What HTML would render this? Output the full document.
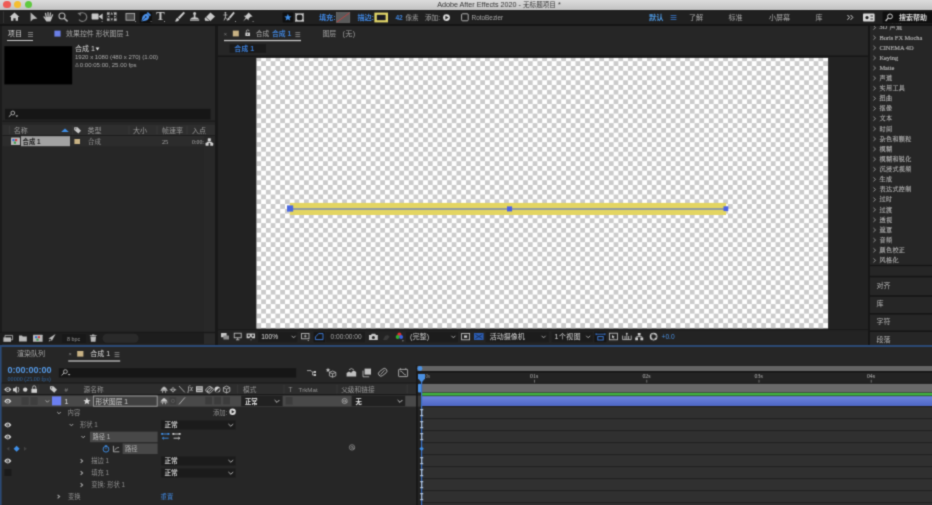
<!DOCTYPE html>
<html lang="zh-CN">
<head>
<meta charset="utf-8">
<title>Adobe After Effects 2020 - 无标题项目 *</title>
<style>
*{margin:0;padding:0;box-sizing:border-box}
html,body{width:932px;height:505px;overflow:hidden;background:#232323}
body{position:relative;font-family:"Liberation Sans","Noto Sans CJK SC",sans-serif;font-size:7px;color:#a8a8a8;line-height:1}
.a{position:absolute}
.t{position:absolute;white-space:nowrap;line-height:10px;height:10px}
.s{font-family:"Liberation Serif","Noto Serif CJK SC",serif}
.b{color:#4f9be6}
.w{color:#d8d8d8}
svg{position:absolute;overflow:visible}
#app{position:absolute;left:0;top:0;width:932px;height:505px;overflow:hidden;filter:url(#soft);will-change:transform}
</style>
</head>
<body>
<svg width="0" height="0" style="position:absolute"><defs><filter id="soft" x="0" y="0" width="100%" height="100%" color-interpolation-filters="sRGB"><feConvolveMatrix order="3" kernelMatrix="1 4 1 4 16 4 1 4 1" divisor="36" edgeMode="duplicate" preserveAlpha="true"/></filter></defs></svg>
<div id="app">

<!-- ===== title bar ===== -->
<div class="a" id="titlebar" style="left:0;top:0;width:932px;height:9.6px;background:linear-gradient(#dcdcdc,#c2c2c2)"></div>
<div class="a" style="left:3.4px;top:1.2px;width:7.2px;height:7.2px;border-radius:50%;background:#ee5b55"></div>
<div class="a" style="left:14px;top:1.2px;width:7.2px;height:7.2px;border-radius:50%;background:#f5be30"></div>
<div class="a" style="left:24.9px;top:1.2px;width:7.2px;height:7.2px;border-radius:50%;background:#5fc93f"></div>
<div class="t" style="left:437.2px;top:0.3px;font-size:7.2px;color:#363636">Adobe After Effects 2020 - <span style="font-size:6.6px">无标题项目</span> *</div>

<!-- ===== toolbar ===== -->
<div class="a" id="toolbar" style="left:0;top:9.6px;width:932px;height:15.4px;background:#202020"></div>
<div class="a" style="left:0;top:24px;width:932px;height:1.5px;background:#141414"></div>

<svg id="tbicons" style="left:0;top:0" width="932" height="505" viewBox="0 0 932 505">
<g fill="#c8c8c8" stroke="none">
<!-- grip -->
<rect x="3.2" y="11.5" width="0.8" height="11.5" fill="#3a3a3a"/>
<!-- home -->
<path d="M14.5 12.6 L9.6 17 L11 17 L11 20.8 L13.4 20.8 L13.4 18.2 L15.6 18.2 L15.6 20.8 L18 20.8 L18 17 L19.4 17 Z"/>
<!-- arrow -->
<path d="M30.6 12.6 L30.6 21.6 L33 19.2 L37.4 18.6 Z" fill="#b4b4b4"/>
<!-- hand -->
<path d="M45.6 17 L51.6 17 C51.8 19 51.2 20.4 50.4 21.4 L46.4 21.4 C45.6 20.6 45.2 19 45.6 17 Z" fill="#c0c0c0"/>
<path d="M46.4 17.6 L45.5 13.4 M48.1 17.4 L48 12.6 M49.8 17.4 L50.5 13 M51.2 18 L52.6 14.8 M46 19.6 L44 16.8" stroke="#c0c0c0" stroke-width="1.25" stroke-linecap="round" fill="none"/>
<!-- magnifier -->
<circle cx="62" cy="16" r="3" fill="none" stroke="#b0b0b0" stroke-width="1.1"/>
<path d="M64.2 18.2 L67.6 21.4" stroke="#b0b0b0" stroke-width="1.5" fill="none"/>
<!-- rotate -->
<path d="M79.4 14 A4.3 4.3 0 1 1 79 19.6" fill="none" stroke="#7c7c7c" stroke-width="1.2"/>
<path d="M77.4 13 L81 12.4 L80.6 16 Z" fill="#7c7c7c"/>
<!-- camera -->
<rect x="91.6" y="13.6" width="7" height="6" rx="0.8"/>
<path d="M98.6 16.6 L102.6 13.6 L102.6 19.8 Z"/>
<rect x="101.6" y="21" width="1" height="1" fill="#999"/>
<!-- pan behind -->
<g fill="#b4b4b4"><rect x="107" y="12.4" width="2.6" height="2.4"/><rect x="114" y="12.4" width="2.6" height="2.4"/><rect x="107" y="18.4" width="2.6" height="2.4"/><rect x="114" y="18.4" width="2.6" height="2.4"/>
<path d="M110.4 14.6 L111.8 12.6 L113.2 14.6 Z M110.4 18.6 L111.8 20.6 L113.2 18.6 Z M109.4 15.4 L107.4 16.6 L109.4 17.8 Z M114.2 15.4 L116.2 16.6 L114.2 17.8 Z"/></g>
<path d="M107 12.4 H116.6 V20.8 H107 Z" fill="none" stroke="#8a8a8a" stroke-width="0.5" stroke-dasharray="1 1"/>
<!-- rectangle -->
<rect x="126" y="13.4" width="8.6" height="6.8" fill="#4a4a4a" stroke="#b0b0b0" stroke-width="0.9"/>
<rect x="135" y="21" width="1" height="1" fill="#999"/>
<!-- pen selected -->
<rect x="139.6" y="11.8" width="12.4" height="11.4" rx="1" fill="#101010"/>
<path d="M141.4 21.4 L142.4 16.8 C143.4 14.8 145.6 13.6 147 13.8 L149.2 16 C149.4 17.4 148.2 19.6 146.2 20.6 Z" fill="#4a90ea"/>
<path d="M147.9 12 L151 15.1 L149.8 16.3 L146.7 13.2 Z" fill="#4a90ea"/>
<path d="M141.6 21.2 L145.4 17.4" stroke="#101010" stroke-width="0.6"/>
<circle cx="145.8" cy="17" r="0.8" fill="#101010"/>
<rect x="150.6" y="21" width="1" height="1" fill="#808080"/>
<!-- brush -->
<path d="M183.6 11.8 L185 13 L179.6 19 L177.8 17.6 Z"/>
<path d="M177.4 17.8 L179.2 19.4 C178.8 21 176.8 21.8 175 21.4 C176 20.6 175.8 18.6 177.4 17.8 Z"/>
<!-- stamp -->
<circle cx="194.6" cy="13.4" r="1.5"/>
<path d="M193.9 14.4 L195.3 14.4 L195.6 17.4 L197.2 17.6 L199 19 L190.2 19 L192 17.6 L193.6 17.4 Z"/>
<rect x="190" y="19.4" width="9.2" height="1.3"/>
<!-- eraser -->
<path d="M210.4 12.6 L215 16.4 L210.4 21 L205 20.8 L204.6 18.6 Z"/>
<path d="M206 17.4 L210 21" stroke="#202020" stroke-width="0.7"/>
<!-- roto brush -->
<path d="M233.4 11.8 L234.8 13 L230.4 18.4 L228.8 17.2 Z"/>
<path d="M228.4 17.4 L230 18.8 C229.6 20.2 228 20.8 226.6 20.4 C227.6 19.8 227.2 18 228.4 17.4 Z"/>
<circle cx="225.4" cy="12.8" r="0.9"/>
<path d="M225.4 13.6 V17.4 M223.4 15 H227.4 M225.4 17.2 L224 20.4 M225.4 17.2 L226.6 19.4" stroke="#c8c8c8" stroke-width="0.8" fill="none"/>
<rect x="235" y="21" width="1" height="1" fill="#999"/>
<!-- pin -->
<path d="M248.6 12.6 L252.6 16.4 L250.6 16.8 L248.6 18.8 L248.6 20.6 L246.6 18.6 L243 21.4 L245.8 17.8 L243.8 15.8 L245.6 15.8 L247.6 13.8 Z"/>
<rect x="252.6" y="21" width="1" height="1" fill="#999"/>
<!-- star box -->
<rect x="282.6" y="12.4" width="10.6" height="10" rx="0.8" fill="#0f0f0f"/>
<path d="M287.9 13.8 L288.9 16.2 L291.5 16.4 L289.5 18 L290.2 20.6 L287.9 19.2 L285.6 20.6 L286.3 18 L284.3 16.4 L286.9 16.2 Z" fill="#3f8fe8"/>
<!-- bezier box -->
<rect x="295.2" y="13.2" width="8.8" height="8.6" fill="#d8d8d8"/>
<rect x="296.8" y="14.8" width="5.6" height="5.4" rx="1.6" fill="#1a1a1a"/>
<path d="M297 13.2 v1 M299 13.2 v1 M301 13.2 v1 M303 13.2 v1 M297 20.8 v1 M299 20.8 v1 M301 20.8 v1 M303 20.8 v1 M295.2 15 h1 M295.2 17 h1 M295.2 19 h1 M303 15 h1 M303 17 h1 M303 19 h1" stroke="#3a3a3a" stroke-width="0.8"/>
<!-- fill swatch -->
<rect x="336.4" y="12.6" width="13.4" height="9.8" fill="#5a5a5a" stroke="#777" stroke-width="0.6"/>
<path d="M336.8 22 L349.4 13" stroke="#e03838" stroke-width="0.7"/>
<!-- stroke swatch -->
<rect x="374.4" y="12.6" width="13.6" height="9.8" fill="#e0d468"/>
<rect x="376.8" y="14.8" width="8.8" height="5.4" fill="#1c1c22"/>
<!-- add circle -->
<circle cx="446.5" cy="17.6" r="3.4" fill="#dcdcdc"/>
<path d="M445.4 15.8 L448.6 17.6 L445.4 19.4 Z" fill="#202020"/>
<!-- checkbox -->
<rect x="461.6" y="13.8" width="6.6" height="7" rx="1" fill="none" stroke="#c0c0c0" stroke-width="0.9"/>
<!-- workspace hamburger -->
<path d="M670.6 15.5 H676.4 M670.6 17.5 H676.4 M670.6 19.5 H676.4" stroke="#3a7ad0" stroke-width="0.8"/>
<!-- chevrons >> -->
<path d="M847.4 15 L849.6 17.4 L847.4 19.8 M850.6 15 L852.8 17.4 L850.6 19.8" fill="none" stroke="#d0d0d0" stroke-width="1"/>
<!-- sync icon -->
<rect x="863" y="13.6" width="11.6" height="8" rx="0.8" fill="#d8d8d8"/>
<circle cx="867" cy="17.6" r="1.6" fill="#202020"/>
<path d="M870.4 16 H873 M870.4 19 H873" stroke="#202020" stroke-width="0.9"/>
<!-- search box -->
<rect x="882.6" y="11.6" width="49.4" height="11.6" fill="#0f0f0f"/>
<circle cx="890" cy="16.4" r="2.4" fill="none" stroke="#d0d0d0" stroke-width="1"/>
<path d="M888.2 18.2 L885.6 21" stroke="#d0d0d0" stroke-width="1.2"/>
</g>
</svg>
<div class="t" style="left:156.2px;top:10.2px;font-size:12.6px;line-height:13px;height:13px;font-family:'Liberation Serif',serif;color:#c8c8c8;font-weight:bold">T</div>
<div class="a" style="left:164.4px;top:21px;width:1px;height:1px;background:#999"></div>
<div class="t b" style="left:319px;top:12.6px;font-size:7.1px;font-weight:bold;color:#3f84dc">填充:</div>
<div class="t b" style="left:357.4px;top:12.6px;font-size:7.1px;font-weight:bold;color:#3f84dc">描边:</div>
<div class="t b" style="left:395.4px;top:12.6px;font-size:6.6px;font-weight:bold;color:#3f84dc">42</div>
<div class="t" style="left:405.4px;top:12.6px;font-size:6.6px;color:#9a9a9a">像素</div>
<div class="t" style="left:425px;top:12.6px;font-size:6.6px;color:#a8a8a8">添加:</div>
<div class="t" style="left:471.6px;top:12.6px;font-size:6.4px;color:#a8a8a8">RotoBezier</div>
<div class="t b" style="left:649px;top:12.5px;font-size:7.2px;font-weight:bold">默认</div>
<div class="t" style="left:689px;top:12.5px;font-size:7px">了解</div>
<div class="t" style="left:728.6px;top:12.5px;font-size:7px">标准</div>
<div class="t" style="left:769px;top:12.5px;font-size:7px">小屏幕</div>
<div class="t" style="left:815.4px;top:12.5px;font-size:7px">库</div>
<div class="t w" style="left:899px;top:12.5px;font-size:7px;font-weight:bold">搜索帮助</div>


<!-- ===== project panel ===== -->
<div class="a" id="project" style="left:0;top:25.5px;width:215.4px;height:319px;background:#262626"></div>
<div class="a" style="left:0;top:25.5px;width:2.4px;height:319px;background:#1b1b1b"></div>
<div class="t" style="left:7.8px;top:28.6px;font-size:7.2px;color:#d0d0d0">项目</div>
<div class="a" style="left:7.2px;top:39.6px;width:26px;height:1.1px;background:#c8c8c8"></div>
<svg style="left:0;top:0" width="216" height="345" viewBox="0 0 216 345">
<path d="M28 32.5 H33 M28 34.5 H33 M28 36.5 H33" stroke="#a0a0a0" stroke-width="0.7"/>
<rect x="54.4" y="30.6" width="6.2" height="6" fill="#6b7fe6"/>
<!-- thumbnail -->
<rect x="4.4" y="46.2" width="67.8" height="38.2" fill="#000"/>
<path d="M95.6 47.6 L99.4 47.6 L97.5 50.6 Z" fill="#e8e8e8"/>
<path d="M75.4 66.4 L77 63 L78.6 66.4 Z" fill="none" stroke="#909090" stroke-width="0.6"/>
<!-- search bar -->
<rect x="5" y="108.8" width="205.6" height="10.6" fill="#161616"/>
<circle cx="12.8" cy="113" r="1.9" fill="none" stroke="#c8c8c8" stroke-width="0.8"/>
<path d="M11.4 114.4 L8.8 116.8" stroke="#c8c8c8" stroke-width="0.9"/>
<path d="M15.4 115.4 L18.2 115.4 L16.8 117 Z" fill="#c8c8c8"/>
<!-- header row -->
<rect x="2.4" y="120.6" width="212.6" height="1.2" fill="#1a1a1a"/>
<rect x="2.4" y="124.8" width="212.6" height="10.4" fill="#2e2e2e"/>
<rect x="2.4" y="135.2" width="212.6" height="0.8" fill="#1c1c1c"/>
<rect x="2.4" y="136" width="201.6" height="10.4" fill="#2c2c2c"/>
<rect x="204" y="136" width="11" height="196" fill="#282828"/>
<path d="M9.6 126 V134.4 M72.4 126 V134.4 M129 126 V134.4 M157 126 V134.4 M187 126 V134.4" stroke="#3c3c3c" stroke-width="0.7"/>
<path d="M61.2 132 L65 128.4 L68.8 132 Z" fill="#3f8fe8"/>
<path d="M74.2 127.2 L77.6 127.2 L81 130.8 L78.4 133.6 L74.2 130 Z" fill="#c8c8c8"/>
<circle cx="75.8" cy="128.8" r="0.6" fill="#2e2e2e"/>
<!-- row -->
<rect x="21" y="136.2" width="49" height="10" fill="#a2a2a2"/>
<rect x="11" y="137.6" width="9" height="7.4" rx="0.6" fill="#b8b8b8"/>
<rect x="12.4" y="139" width="2.2" height="2.2" fill="#3a6fd0"/><rect x="15" y="139" width="2.2" height="2.2" fill="#d04040"/><rect x="13.8" y="141.6" width="2.2" height="2.2" fill="#40a050"/>
<rect x="74.4" y="139" width="5.6" height="5" fill="#c8b284"/>
<!-- flowchart icon -->
<path d="M208 138.6 h2.6 v2.4 h-2.6z M205.8 143 h2.6 v2.4 h-2.6z M210.4 143 h2.6 v2.4 h-2.6z M209.3 141 v1 M207.1 143 v-1 h4.6 v1" fill="#d0d0d0" stroke="#d0d0d0" stroke-width="0.5"/>
<!-- bottom bar -->
<rect x="0" y="332.4" width="215" height="11.6" fill="#1d1d1d"/>
<rect x="0" y="331.8" width="215" height="0.8" fill="#161616"/>
<g fill="#b8b8b8">
<path d="M5 335.4 h7.6 v4.4 h-7.6z" fill="none" stroke="#b8b8b8" stroke-width="0.8"/><rect x="3.4" y="337.4" width="7.6" height="4.4"/>
<path d="M19 335.6 h3 l0.8 0.9 h4 v5 h-7.8z"/>
<rect x="33" y="334.8" width="9.6" height="7" rx="0.5"/>
<rect x="35" y="336.2" width="2.2" height="2" fill="#3a6fd0"/><rect x="37.8" y="336.2" width="2.2" height="2" fill="#d04040"/><rect x="36.4" y="338.6" width="2.2" height="2" fill="#40a050"/>
<path d="M55.6 334 L51.8 341 L50.6 339 L48.4 338.6 Z"/><path d="M49.6 339.6 L48.6 341.6 L50.8 340.8Z"/>
<path d="M90.4 336.4 h5.6 l-0.5 5.4 h-4.6z M89.8 335.2 h6.8 v0.9 h-6.8z M92 334.4 h2.4 v0.8 h-2.4z"/>
</g>
<rect x="62" y="334" width="24" height="9" fill="#181818"/>
<rect x="204" y="333.2" width="11.4" height="10.8" fill="#2a2a2a"/>
<rect x="102.6" y="333.8" width="36" height="9" rx="4.5" fill="#2a2a2a"/>
</svg>
<div class="t" style="left:66px;top:28.8px;font-size:6.95px;color:#a8a8a8">效果控件 形状图层 1</div>
<div class="t" style="left:75px;top:43.8px;font-size:7px;color:#d4d4d4">合成 1</div>
<div class="t" style="left:75px;top:52.2px;font-size:6.05px;color:#acacac">1920 x 1080  (480 x 270) (1.00)</div>
<div class="t" style="left:79.8px;top:59.6px;font-size:6.05px;color:#acacac">0:00:05:00, 25.00 fps</div>
<div class="t" style="left:13.8px;top:126px;font-size:7px;color:#9a9a9a">名称</div>
<div class="t" style="left:87.6px;top:126px;font-size:7px;color:#9a9a9a">类型</div>
<div class="t" style="left:133px;top:126px;font-size:7px;color:#9a9a9a">大小</div>
<div class="t" style="left:162px;top:126px;font-size:7px;color:#9a9a9a">帧速率</div>
<div class="t" style="left:192px;top:126px;font-size:7px;color:#9a9a9a">入点</div>
<div class="t" style="left:22.6px;top:137.4px;font-size:6.3px;font-weight:bold;color:#1a1a1a">合成 1</div>
<div class="t s" style="left:88px;top:137px;font-size:6.4px;color:#a8a8a8">合成</div>
<div class="t s" style="left:162px;top:137px;font-size:6.2px;color:#b0b0b0">25</div>
<div class="t s" style="left:192px;top:137px;font-size:5.8px;color:#a8a8a8">0:00:</div>
<div class="t" style="left:67px;top:333.8px;font-size:5.4px;color:#9a9a9a">8 bpc</div>


<!-- ===== comp panel ===== -->
<div class="a" style="left:215.4px;top:25.5px;width:2.3px;height:320px;background:#181818"></div>
<div class="a" id="comp" style="left:217.7px;top:25.5px;width:650px;height:319px;background:#262626"></div>
<svg style="left:0;top:0" width="932" height="505" viewBox="0 0 932 505">
<defs>
<pattern id="chk" x="256.4" y="51.67" width="9.526" height="9.526" patternUnits="userSpaceOnUse">
<rect width="9.526" height="9.526" fill="#ffffff"/>
<rect x="0" y="4.763" width="4.763" height="4.763" fill="#cbcbcb"/>
<rect x="4.763" y="0" width="4.763" height="4.763" fill="#cbcbcb"/>
</pattern>
</defs>
<!-- tab row -->
<path d="M224.4 33.2 L226.4 35.4 M226.4 33.2 L224.4 35.4" stroke="#8a8a8a" stroke-width="0.6"/>
<rect x="232.8" y="30.6" width="6" height="5.8" fill="#c8b284"/>
<rect x="245.4" y="32.6" width="4.6" height="3.4" fill="#d0d0d0"/>
<path d="M246.4 32.6 V31.4 A1.3 1.3 0 0 1 249 31 " fill="none" stroke="#d0d0d0" stroke-width="0.7"/>
<rect x="247.3" y="33.6" width="0.8" height="1.4" fill="#232323"/>
<path d="M295.4 32.6 H300.2 M295.4 34.6 H300.2 M295.4 36.6 H300.2" stroke="#a0a0a0" stroke-width="0.7"/>
<rect x="224" y="39.9" width="77" height="1.3" fill="#c8c8c8"/>
<rect x="229.6" y="44.2" width="36.4" height="8.6" fill="#1a1a1a"/>
<rect x="218" y="55.4" width="650" height="1.5" fill="#161616"/>
<!-- viewer -->
<rect x="218" y="56.9" width="650" height="272.6" fill="#222222"/>
<rect x="256.4" y="57.9" width="571.7" height="270.6" fill="url(#chk)"/>
<!-- shape -->
<rect x="289.8" y="202.9" width="436.3" height="12.1" fill="#e3d562"/>
<rect x="289.8" y="208.1" width="436.3" height="1.8" fill="#8a96a8"/>
<rect x="287" y="205.4" width="6.2" height="6.2" fill="#4a68e0"/>
<rect x="507" y="206.4" width="5.1" height="5" fill="#4a62e6"/>
<rect x="723.5" y="206.3" width="4.8" height="4.8" fill="#4a62e6"/>
<!-- footer -->
<rect x="218" y="329.4" width="650" height="1" fill="#151515"/>
<rect x="218" y="330.4" width="650" height="14.6" fill="#232323"/>
<g fill="#c8c8c8">
<!-- always preview -->
<rect x="221" y="333" width="5.6" height="4.2" rx="0.5"/><rect x="223.4" y="335.4" width="5.6" height="4.2" rx="0.5" fill="#8a8a8a"/>
<!-- monitor -->
<rect x="234.2" y="333.2" width="7" height="4.6" fill="none" stroke="#c8c8c8" stroke-width="0.8"/><path d="M236 339.8 H239.4 M237.7 338 V339.8" stroke="#c8c8c8" stroke-width="0.8"/>
<!-- goggles -->
<path d="M246.6 333.4 h8.4 v4.8 h-2.8 l-1.4 -1.6 l-1.4 1.6 h-2.8z"/><circle cx="248.8" cy="335.6" r="1.1" fill="#232323"/><circle cx="252.8" cy="335.6" r="1.1" fill="#262626"/>
<path d="M250.2 339.6 h1.6 l-0.8 1z"/>
</g>
<rect x="258.4" y="331.8" width="38.8" height="10.4" fill="#1c1c1c"/>
<path d="M291.6 335.8 L293.6 337.8 L295.6 335.8" fill="none" stroke="#b0b0b0" stroke-width="0.9"/>
<!-- region of interest -->
<rect x="301.6" y="333.4" width="7.4" height="5.4" fill="none" stroke="#c8c8c8" stroke-width="0.8"/><path d="M305.3 334.6 V337.6 M303.8 336.1 H306.8" stroke="#c8c8c8" stroke-width="0.7"/><path d="M307.4 340 h1.8 l-0.9 1z" fill="#c8c8c8"/>
<!-- mask toggle -->
<rect x="313.6" y="331.8" width="11.4" height="10.4" fill="#161616"/>
<path d="M315.4 339.6 L315.4 337 L318.6 333.6 L323 333.6 L323 339.6 Z" fill="none" stroke="#3f7fe0" stroke-width="0.9"/>
<rect x="325.6" y="331.8" width="39.4" height="10.4" fill="#1c1c1c"/>
<!-- camera -->
<path d="M369 335 h2 l0.8 -1.2 h3.4 l0.8 1.2 h1.8 v5 h-8.8z" fill="#c8c8c8"/><circle cx="373.4" cy="337.4" r="1.5" fill="#262626"/>
<!-- dim -->
<path d="M383 340 L385 336 L387.6 335 L389.6 336.8 L387 340Z" fill="#3a3a3a"/>
<!-- rgb -->
<circle cx="399.4" cy="334.6" r="2" fill="#e03030"/><circle cx="397.7" cy="337" r="2" fill="#30b030"/><circle cx="401.1" cy="337" r="2" fill="#3860e0"/>
<path d="M402 340.6 h1.8 l-0.9 1z" fill="#c8c8c8"/>
<rect x="406" y="331.8" width="52" height="10.4" fill="#1c1c1c"/>
<path d="M451.4 335.8 L453.4 337.8 L455.4 335.8" fill="none" stroke="#b0b0b0" stroke-width="0.9"/>
<!-- fast preview -->
<rect x="461.6" y="333.4" width="8" height="6.4" fill="none" stroke="#c8c8c8" stroke-width="0.8"/><rect x="464" y="335.4" width="3.2" height="2.4" fill="#c8c8c8"/>
<!-- transparency grid -->
<rect x="474" y="333" width="9.6" height="7" fill="#2c5cb0"/>
<path d="M475.4 334.4 L478.8 336.5 L475.4 338.6 M482.2 334.4 L478.8 336.5 L482.2 338.6" fill="none" stroke="#152848" stroke-width="0.8"/>
<rect x="485.6" y="331.8" width="63" height="10.4" fill="#1c1c1c"/>
<path d="M541.6 335.8 L543.6 337.8 L545.6 335.8" fill="none" stroke="#b0b0b0" stroke-width="0.9"/>
<rect x="551.6" y="331.8" width="41" height="10.4" fill="#1c1c1c"/>
<path d="M586.2 335.8 L588.2 337.8 L590.2 335.8" fill="none" stroke="#b0b0b0" stroke-width="0.9"/>
<!-- blue toggle -->
<rect x="594.4" y="331.8" width="12" height="10.4" fill="#151515"/>
<path d="M596 334.2 H605 M596 333.2 V335.2 M605 333.2 V335.2" stroke="#3f7fe0" stroke-width="0.8" fill="none"/><rect x="597.8" y="336.6" width="5.4" height="3.4" fill="none" stroke="#3f7fe0" stroke-width="0.9"/>
<!-- icon -->
<rect x="609.4" y="333.2" width="8" height="6.6" fill="none" stroke="#c8c8c8" stroke-width="0.8"/><path d="M612 335 v3.2 l1 -0.8 l0.8 1.4 l0.6 -0.3 l-0.8 -1.4 l1.2 -0.2z" fill="#c8c8c8"/>
<!-- graph -->
<path d="M622.6 335.6 v4 h8.6 v-4 M625 339.4 v-3.4 M628.6 339.4 v-3.4 M626.8 339.4 v-6" fill="none" stroke="#c8c8c8" stroke-width="0.8"/><circle cx="626.8" cy="333.6" r="0.9" fill="#c8c8c8"/>
<!-- flowchart -->
<path d="M637.8 333 h2.8 v2.6 h-2.8z M635.2 337.6 h2.8 v2.6 h-2.8z M640.4 337.6 h2.8 v2.6 h-2.8z" fill="#d0d0d0"/><path d="M639.2 335.6 v1 M636.6 337.6 v-1 h5.2 v1" fill="none" stroke="#d0d0d0" stroke-width="0.7"/>
<!-- aperture -->
<circle cx="653.6" cy="336.6" r="3.1" fill="none" stroke="#d0d0d0" stroke-width="1.5"/>
<path d="M651 335 l2.6 -1.4 M656.2 335 l0 3 M651.6 339 l3 0.6" stroke="#262626" stroke-width="0.5"/>
</svg>
<div class="t" style="left:255.8px;top:28.8px;font-size:6.8px;color:#a8a8a8">合成</div>
<div class="t b" style="left:272px;top:28.8px;font-size:6.8px;font-weight:bold;color:#3f80d4">合成 1</div>
<div class="t" style="left:322.4px;top:28.8px;font-size:6.9px;color:#a0a0a0">图层</div>
<div class="t" style="left:342.6px;top:28.8px;font-size:7.2px;color:#a0a0a0;letter-spacing:0.3px">(无)</div>
<div class="t b" style="left:234.2px;top:43.6px;font-size:7px;font-weight:bold;color:#3a7ad0">合成 1</div>
<div class="t" style="left:261.2px;top:332.2px;font-size:6.6px;color:#dedede">100%</div>
<div class="t" style="left:330.5px;top:332.2px;font-size:6.6px;color:#a8a8a8">0:00:00:00</div>
<div class="t" style="left:410px;top:332px;font-size:7.2px;color:#c8c8c8">(完整)</div>
<div class="t" style="left:489.8px;top:332px;font-size:7px;color:#d4d4d4">活动摄像机</div>
<div class="t" style="left:554.6px;top:332px;font-size:6.9px;letter-spacing:0.5px;color:#d6d6d6">1个视图</div>
<div class="t b" style="left:661.6px;top:332.2px;font-size:6.6px;color:#4a90e2">+0.0</div>


<!-- ===== right panel ===== -->
<div class="a" style="left:867.5px;top:25.5px;width:2.5px;height:320px;background:#161616"></div>
<div class="a" id="right" style="left:870px;top:25.5px;width:62px;height:319px;background:#262626"></div>
<svg style="left:0;top:0" width="932" height="505" viewBox="0 0 932 505">
<rect x="870" y="264.8" width="62" height="1.6" fill="#151515"/>
<rect x="870" y="266.4" width="62" height="9.4" fill="#262626"/>
<rect x="870" y="275.8" width="62" height="1.6" fill="#151515"/>
<rect x="870" y="295.2" width="62" height="1.6" fill="#151515"/>
<rect x="870" y="313" width="62" height="1.6" fill="#151515"/>
<rect x="870" y="330.4" width="62" height="1.6" fill="#151515"/>
<path d="M873.4 25.60 L875.6 27.60 L873.4 29.60 M873.4 35.72 L875.6 37.72 L873.4 39.72 M873.4 45.84 L875.6 47.84 L873.4 49.84 M873.4 55.96 L875.6 57.96 L873.4 59.96 M873.4 66.08 L875.6 68.08 L873.4 70.08 M873.4 76.20 L875.6 78.20 L873.4 80.20 M873.4 86.32 L875.6 88.32 L873.4 90.32 M873.4 96.44 L875.6 98.44 L873.4 100.44 M873.4 106.56 L875.6 108.56 L873.4 110.56 M873.4 116.68 L875.6 118.68 L873.4 120.68 M873.4 126.80 L875.6 128.80 L873.4 130.80 M873.4 136.92 L875.6 138.92 L873.4 140.92 M873.4 147.04 L875.6 149.04 L873.4 151.04 M873.4 157.16 L875.6 159.16 L873.4 161.16 M873.4 167.28 L875.6 169.28 L873.4 171.28 M873.4 177.40 L875.6 179.40 L873.4 181.40 M873.4 187.52 L875.6 189.52 L873.4 191.52 M873.4 197.64 L875.6 199.64 L873.4 201.64 M873.4 207.76 L875.6 209.76 L873.4 211.76 M873.4 217.88 L875.6 219.88 L873.4 221.88 M873.4 228.00 L875.6 230.00 L873.4 232.00 M873.4 238.12 L875.6 240.12 L873.4 242.12 M873.4 248.24 L875.6 250.24 L873.4 252.24 M873.4 258.36 L875.6 260.36 L873.4 262.36 " fill="none" stroke="#a8a8a8" stroke-width="0.8"/>
</svg>
<div class="t s" style="left:879.4px;top:22.40px;font-size:6.1px;letter-spacing:0.4px;color:#b2b2b2;-webkit-text-stroke:0.15px #b2b2b2">3D 声道</div>
<div class="t s" style="left:879.4px;top:32.52px;font-size:6.4px;color:#b2b2b2;-webkit-text-stroke:0.15px #b2b2b2">Boris FX Mocha</div>
<div class="t s" style="left:879.4px;top:42.64px;font-size:6.4px;color:#b2b2b2;-webkit-text-stroke:0.15px #b2b2b2">CINEMA 4D</div>
<div class="t s" style="left:879.4px;top:52.76px;font-size:6.4px;color:#b2b2b2;-webkit-text-stroke:0.15px #b2b2b2">Keying</div>
<div class="t s" style="left:879.4px;top:62.88px;font-size:6.4px;color:#b2b2b2;-webkit-text-stroke:0.15px #b2b2b2">Matte</div>
<div class="t s" style="left:879.4px;top:73.00px;font-size:6.1px;letter-spacing:0.4px;color:#b2b2b2;-webkit-text-stroke:0.15px #b2b2b2">声道</div>
<div class="t s" style="left:879.4px;top:83.12px;font-size:6.1px;letter-spacing:0.4px;color:#b2b2b2;-webkit-text-stroke:0.15px #b2b2b2">实用工具</div>
<div class="t s" style="left:879.4px;top:93.24px;font-size:6.1px;letter-spacing:0.4px;color:#b2b2b2;-webkit-text-stroke:0.15px #b2b2b2">扭曲</div>
<div class="t s" style="left:879.4px;top:103.36px;font-size:6.1px;letter-spacing:0.4px;color:#b2b2b2;-webkit-text-stroke:0.15px #b2b2b2">抠像</div>
<div class="t s" style="left:879.4px;top:113.48px;font-size:6.1px;letter-spacing:0.4px;color:#b2b2b2;-webkit-text-stroke:0.15px #b2b2b2">文本</div>
<div class="t s" style="left:879.4px;top:123.60px;font-size:6.1px;letter-spacing:0.4px;color:#b2b2b2;-webkit-text-stroke:0.15px #b2b2b2">时间</div>
<div class="t s" style="left:879.4px;top:133.72px;font-size:6.1px;letter-spacing:0.4px;color:#b2b2b2;-webkit-text-stroke:0.15px #b2b2b2">杂色和颗粒</div>
<div class="t s" style="left:879.4px;top:143.84px;font-size:6.1px;letter-spacing:0.4px;color:#b2b2b2;-webkit-text-stroke:0.15px #b2b2b2">模糊</div>
<div class="t s" style="left:879.4px;top:153.96px;font-size:6.1px;letter-spacing:0.4px;color:#b2b2b2;-webkit-text-stroke:0.15px #b2b2b2">模糊和锐化</div>
<div class="t s" style="left:879.4px;top:164.08px;font-size:6.1px;letter-spacing:0.4px;color:#b2b2b2;-webkit-text-stroke:0.15px #b2b2b2">沉浸式视频</div>
<div class="t s" style="left:879.4px;top:174.20px;font-size:6.1px;letter-spacing:0.4px;color:#b2b2b2;-webkit-text-stroke:0.15px #b2b2b2">生成</div>
<div class="t s" style="left:879.4px;top:184.32px;font-size:6.1px;letter-spacing:0.4px;color:#b2b2b2;-webkit-text-stroke:0.15px #b2b2b2">表达式控制</div>
<div class="t s" style="left:879.4px;top:194.44px;font-size:6.1px;letter-spacing:0.4px;color:#b2b2b2;-webkit-text-stroke:0.15px #b2b2b2">过时</div>
<div class="t s" style="left:879.4px;top:204.56px;font-size:6.1px;letter-spacing:0.4px;color:#b2b2b2;-webkit-text-stroke:0.15px #b2b2b2">过渡</div>
<div class="t s" style="left:879.4px;top:214.68px;font-size:6.1px;letter-spacing:0.4px;color:#b2b2b2;-webkit-text-stroke:0.15px #b2b2b2">透视</div>
<div class="t s" style="left:879.4px;top:224.80px;font-size:6.1px;letter-spacing:0.4px;color:#b2b2b2;-webkit-text-stroke:0.15px #b2b2b2">遮罩</div>
<div class="t s" style="left:879.4px;top:234.92px;font-size:6.1px;letter-spacing:0.4px;color:#b2b2b2;-webkit-text-stroke:0.15px #b2b2b2">音频</div>
<div class="t s" style="left:879.4px;top:245.04px;font-size:6.1px;letter-spacing:0.4px;color:#b2b2b2;-webkit-text-stroke:0.15px #b2b2b2">颜色校正</div>
<div class="t s" style="left:879.4px;top:255.16px;font-size:6.1px;letter-spacing:0.4px;color:#b2b2b2;-webkit-text-stroke:0.15px #b2b2b2">风格化</div>
<div class="a" style="left:868px;top:24px;width:64px;height:1.5px;background:#141414"></div>
<div class="t" style="left:876.6px;top:281.40px;font-size:7px;color:#b4b4b4">对齐</div>
<div class="t" style="left:876.6px;top:299.40px;font-size:7px;color:#b4b4b4">库</div>
<div class="t" style="left:876.6px;top:317.00px;font-size:7px;color:#b4b4b4">字符</div>
<div class="t" style="left:876.6px;top:334.80px;font-size:7px;color:#b4b4b4">段落</div>


<!-- ===== timeline panel ===== -->
<div class="a" id="timeline" style="left:0;top:345px;width:932px;height:160px;background:#262626"></div>
<svg style="left:0;top:0" width="932" height="505" viewBox="0 0 932 505">
<rect x="0" y="345" width="932" height="2" fill="#2b4974"/>
<rect x="0" y="345" width="1.6" height="160" fill="#2b4974"/>
<path d="M69.2 353 L71.2 355.2 M71.2 353 L69.2 355.2" stroke="#8a8a8a" stroke-width="0.6"/>
<rect x="77.2" y="351" width="6.2" height="5.6" fill="#c8b284"/>
<path d="M114.6 352.6 H119.4 M114.6 354.6 H119.4 M114.6 356.6 H119.4" stroke="#a0a0a0" stroke-width="0.7"/>
<rect x="68.2" y="360.4" width="52" height="1.2" fill="#c8c8c8"/>
<rect x="58.8" y="368.2" width="237.4" height="9.4" fill="#161616"/>
<circle cx="65.4" cy="371.6" r="1.9" fill="none" stroke="#c8c8c8" stroke-width="0.8"/><path d="M64 373 L61.6 375.4" stroke="#c8c8c8" stroke-width="0.9"/><path d="M67.8 374 L70.4 374 L69.1 375.5 Z" fill="#c8c8c8"/>
<g fill="none" stroke="#c0c0c0" stroke-width="0.8">
<path d="M307 370.6 H311 L312.6 372.2 H315.4 M312.6 372.2 V375 H315.4" /><rect x="313.8" y="371" width="2.2" height="2" fill="#c0c0c0" stroke="none"/><rect x="313.8" y="374" width="2.2" height="2" fill="#c0c0c0" stroke="none"/>
<path d="M329.4 372.4 L332.6 371 L335.8 372.4 L335.8 375.8 L332.6 377.2 L329.4 375.8 Z M329.4 372.4 L332.6 373.8 L335.8 372.4 M332.6 373.8 V377.2"/><path d="M328 367.8 L328.7 369.3 L330.3 369.5 L329.1 370.5 L329.5 372 L328 371.2 L326.6 372 L327 370.5 L325.8 369.5 L327.4 369.3Z" fill="#c0c0c0" stroke="none"/>
<path d="M346.6 376.6 V373 L349 371.6 L351.4 373 V376.6 Z M351.4 376.6 V372 L353.8 370.6 L356.2 372 V376.6 Z" fill="#c0c0c0" stroke="none"/><path d="M349 369.8 L351.4 368.6 L353.8 369.8" />
<rect x="364.6" y="368.6" width="6.4" height="6" fill="#c0c0c0" stroke="none"/><path d="M363 370.6 V376.8 H369.2" />
<rect x="378" y="369.8" width="9.4" height="5" rx="2.5" transform="rotate(-38 382.7 372.3)"/><path d="M380.6 374.6 L384.6 370.2" />
<rect x="398.6" y="369.4" width="9" height="7.2" rx="0.6"/><path d="M400.2 371 C403 371 403 375 406 375"/><path d="M400.4 368.2 V369.4 M405.8 368.2 V369.4"/>
</g>
<rect x="1.6" y="382.6" width="414.6" height="1" fill="#161616"/>
<rect x="1.6" y="383.6" width="414.6" height="10.5" fill="#2d2d2d"/>
<rect x="1.6" y="394.1" width="414.6" height="1.4" fill="#1a1a1a"/>
<rect x="1.6" y="395.5" width="415" height="11.1" fill="#494949"/>
<path d="M38.6 384.6 V393.4 M237.6 384.6 V393.4 M284 384.6 V393.4 M337 384.6 V393.4 M407.2 384.6 V393.4" stroke="#3e3e3e" stroke-width="0.7"/>
<path d="M4.2 389.6 Q7.8 384.8 11.4 389.6 Q7.8 394.4 4.2 389.6Z" fill="#d0d0d0"/><circle cx="7.8" cy="389.6" r="1.5" fill="#2d2d2d"/><circle cx="7.8" cy="389.6" r="0.7" fill="#d0d0d0"/>
<path d="M13 388.2 h1.6 l2.2 -2 v7 l-2.2 -2 h-1.6z" fill="#d0d0d0"/><path d="M18 387 Q19.8 389.6 18 392.4" fill="none" stroke="#d0d0d0" stroke-width="0.8"/>
<circle cx="25.2" cy="389.6" r="2.2" fill="#d0d0d0"/>
<rect x="31.4" y="388.8" width="5.6" height="4" fill="#d0d0d0"/><path d="M32.6 388.8 V387.4 A1.6 1.6 0 0 1 35.8 387.4 V388.8" fill="none" stroke="#d0d0d0" stroke-width="0.8"/>
<path d="M50 386.2 L53.4 386.2 L57 389.8 L54.2 392.8 L50 389 Z" fill="#c8c8c8"/><circle cx="51.6" cy="387.8" r="0.6" fill="#2d2d2d"/>
<g fill="none" stroke="#c0c0c0" stroke-width="0.8">
<path d="M161.4 389.6 Q164 384.4 166.8 389.6 Z" fill="#c0c0c0"/><path d="M160.6 390.6 H167.6 M162.6 391 V392.8 M165.6 391 V392.8"/>
<path d="M173 387.4 L175 389.8 L173 392.2 L171 389.8 Z M169.8 389.8 H176.2"/>
<path d="M179 386 L184.8 392.4"/>
<rect x="196" y="386.2" width="6.8" height="6" fill="#c0c0c0" stroke="none"/><path d="M197 388 H201.8 M197 390.4 H201.8" stroke="#2d2d2d" stroke-width="0.6"/>
<rect x="205.4" y="387.4" width="6.6" height="3.8" rx="1.9" transform="rotate(-40 208.7 389.3)"/><rect x="207" y="388.4" width="6.6" height="3.8" rx="1.9" transform="rotate(-40 210.3 390.3)"/>
<circle cx="217.4" cy="389.4" r="2.9" fill="#d0d0d0" stroke="none"/><path d="M215.4 391.4 A2.9 2.9 0 0 0 219.4 387.4 Z" fill="#2d2d2d" stroke="none"/>
<path d="M223.4 387.6 L226.6 386 L229.8 387.6 L229.8 391.4 L226.6 393 L223.4 391.4 Z M223.4 387.6 L226.6 389.2 L229.8 387.6 M226.6 389.2 V393"/>
</g>
<path d="M4.2 401.2 Q7.8 396.4 11.4 401.2 Q7.8 406.0 4.2 401.2Z" fill="#d8d8d8"/><circle cx="7.8" cy="401.2" r="1.5" fill="#494949"/><circle cx="7.8" cy="401.2" r="0.7" fill="#d8d8d8"/>
<rect x="21.6" y="397" width="7" height="8" fill="#3e3e3e"/><rect x="30.6" y="397" width="7" height="8" fill="#3e3e3e"/>
<path d="M45.6 400.4 L47.4 402.2 L49.2 400.4" fill="none" stroke="#a8a8a8" stroke-width="1.0"/>
<rect x="52" y="396.4" width="9.2" height="9" fill="#6b7ff0"/>
<path d="M86.9 397.6 L87.9 400 L90.4 400.2 L88.5 401.8 L89.1 404.3 L86.9 403 L84.7 404.3 L85.3 401.8 L83.4 400.2 L85.9 400 Z" fill="#d8d8d8"/>
<rect x="93.4" y="396" width="63.8" height="10.2" fill="#404040" stroke="#a4a4a4" stroke-width="0.9"/>
<g fill="none" stroke="#c8c8c8" stroke-width="0.8"><path d="M161.4 401 Q164 395.8 166.8 401 Z" fill="#c8c8c8"/><path d="M160.6 402 H167.6 M162.6 402.4 V404.2 M165.6 402.4 V404.2"/>
<rect x="169.6" y="397.2" width="6.6" height="7.4" fill="#3e3e3e" stroke="none"/><circle cx="172.9" cy="400.9" r="1.6" stroke="#6a6a6a" stroke-width="0.6"/>
<path d="M179 404.4 L185 397.4"/></g>
<rect x="205.2" y="396.8" width="6.8" height="7.6" fill="#3c3c3c"/>
<rect x="214.2" y="396.8" width="6.8" height="7.6" fill="#3c3c3c"/>
<rect x="223.2" y="396.8" width="6.8" height="7.6" fill="#3c3c3c"/>
<rect x="241.2" y="395.6" width="41.4" height="10.6" fill="#212121"/>
<path d="M274.6 400 L277 402.4 L279.4 400" fill="none" stroke="#d0d0d0" stroke-width="0.9"/>
<rect x="285.6" y="397" width="7" height="7.6" fill="#3c3c3c"/>
<circle cx="344.6" cy="401" r="2.6" fill="none" stroke="#b0b0b0" stroke-width="0.7"/><circle cx="344.4" cy="401" r="1" fill="none" stroke="#b0b0b0" stroke-width="0.6"/><path d="M345.6 400 V402.2 H347.6" fill="none" stroke="#b0b0b0" stroke-width="0.5"/>
<rect x="351.6" y="395.6" width="53.6" height="10.6" fill="#212121"/>
<path d="M397.6 400 L400 402.4 L402.4 400" fill="none" stroke="#d0d0d0" stroke-width="0.9"/>
<path d="M57.2 412 L59 413.8 L60.8 412" fill="none" stroke="#a8a8a8" stroke-width="1.0"/>
<circle cx="232.6" cy="411.8" r="3.2" fill="#e0e0e0"/><path d="M231.6 410 L234.6 411.8 L231.6 413.6 Z" fill="#232323"/>
<path d="M4.2 425.0 Q7.8 420.2 11.4 425.0 Q7.8 429.8 4.2 425.0Z" fill="#d8d8d8"/><circle cx="7.8" cy="425.0" r="1.5" fill="#232323"/><circle cx="7.8" cy="425.0" r="0.7" fill="#d8d8d8"/>
<path d="M69.6 424 L71.4 425.8 L73.2 424" fill="none" stroke="#a8a8a8" stroke-width="1.0"/>
<rect x="161.2" y="420.4" width="74.4" height="9" fill="#1b1b1b"/>
<path d="M228.4 424 L230.8 426.2 L233.2 424" fill="none" stroke="#c0c0c0" stroke-width="0.9"/>
<path d="M4.2 437.0 Q7.8 432.2 11.4 437.0 Q7.8 441.8 4.2 437.0Z" fill="#d8d8d8"/><circle cx="7.8" cy="437.0" r="1.5" fill="#232323"/><circle cx="7.8" cy="437.0" r="0.7" fill="#d8d8d8"/>
<path d="M81.4 436 L83.2 437.8 L85 436" fill="none" stroke="#a8a8a8" stroke-width="1.0"/>
<rect x="90" y="431.6" width="67.6" height="10.6" fill="#484848"/>
<g fill="none" stroke-width="0.9"><path d="M162.6 434 H168.6 M162.6 438.2 H168.6" stroke="#3f8fe8"/><rect x="161.2" y="433" width="1.8" height="1.8" fill="#3f8fe8" stroke="none"/><rect x="167.6" y="433" width="1.8" height="1.8" fill="#3f8fe8" stroke="none"/><path d="M164 437 L162.2 438.2 L164 439.4" stroke="#3f8fe8" stroke-width="0.7"/>
<path d="M173.6 434 H179.6 M173.6 438.2 H179.6" stroke="#d0d0d0"/><rect x="172.4" y="433" width="1.8" height="1.8" fill="#d0d0d0" stroke="none"/><rect x="178.8" y="433" width="1.8" height="1.8" fill="#d0d0d0" stroke="none"/><path d="M178.2 437 L180 438.2 L178.2 439.4" stroke="#d0d0d0" stroke-width="0.7"/></g>
<path d="M9.4 446.8 L6.6 448.8 L9.4 450.8Z" fill="#444"/><path d="M24 446.8 L26.8 448.8 L24 450.8Z" fill="#444"/>
<path d="M16.6 445.8 L19.6 448.8 L16.6 451.8 L13.6 448.8Z" fill="#3f8fe8"/>
<circle cx="106" cy="449.2" r="2.9" fill="none" stroke="#3f8fe8" stroke-width="0.9"/><path d="M106 449.2 V447.4 M104.8 445.6 H107.2" stroke="#3f8fe8" stroke-width="0.8"/>
<path d="M113.4 445.8 V451.8 H119.4" fill="none" stroke="#c0c0c0" stroke-width="0.8"/><path d="M114.6 450.4 L116.4 448 L119 447.4" fill="none" stroke="#c0c0c0" stroke-width="0.7"/>
<rect x="122.6" y="443.4" width="35" height="10.6" fill="#484848"/>
<circle cx="352" cy="447.4" r="2.7" fill="none" stroke="#9a9a9a" stroke-width="0.7"/><circle cx="351.8" cy="447.4" r="1" fill="none" stroke="#9a9a9a" stroke-width="0.6"/><path d="M353 446.4 V448.6 H355" fill="none" stroke="#9a9a9a" stroke-width="0.5"/>
<path d="M4.2 461.0 Q7.8 456.2 11.4 461.0 Q7.8 465.8 4.2 461.0Z" fill="#d8d8d8"/><circle cx="7.8" cy="461.0" r="1.5" fill="#232323"/><circle cx="7.8" cy="461.0" r="0.7" fill="#d8d8d8"/>
<path d="M80.6 459.2 L82.6 461 L80.6 462.8" fill="none" stroke="#a8a8a8" stroke-width="1.05"/>
<rect x="161.2" y="456.4" width="74.4" height="9" fill="#1b1b1b"/><path d="M228.4 460 L230.8 462.2 L233.2 460" fill="none" stroke="#c0c0c0" stroke-width="0.9"/>
<rect x="4.4" y="469" width="7" height="7" fill="#1a1a1a"/>
<path d="M80.6 471.2 L82.6 473 L80.6 474.8" fill="none" stroke="#a8a8a8" stroke-width="1.05"/>
<rect x="161.2" y="468.4" width="74.4" height="9" fill="#1b1b1b"/><path d="M228.4 472 L230.8 474.2 L233.2 472" fill="none" stroke="#c0c0c0" stroke-width="0.9"/>
<path d="M80.6 483.2 L82.6 485 L80.6 486.8" fill="none" stroke="#a8a8a8" stroke-width="1.05"/>
<path d="M57.6 494.8 L59.6 496.6 L57.6 498.4" fill="none" stroke="#a8a8a8" stroke-width="1.05"/>
<rect x="416.2" y="365.4" width="1.6" height="140" fill="#141414"/>
<rect x="417.8" y="365.4" width="514.2" height="140" fill="#232323"/>
<rect x="417.4" y="366" width="514.6" height="5" fill="#646464"/>
<rect x="417.4" y="366" width="5" height="5" rx="2.4" fill="#4a90e2"/>
<rect x="417.8" y="371" width="514.2" height="1.6" fill="#161616"/>
<path d="M534.50 379.8 V382.8 M646.75 379.8 V382.8 M759.00 379.8 V382.8 M871.25 379.8 V382.8 " stroke="#909090" stroke-width="0.7"/>
<rect x="417.8" y="382.8" width="514.2" height="1" fill="#161616"/>
<rect x="421.2" y="383.8" width="510.8" height="8.6" fill="#6a6a6a"/>
<rect x="418" y="383.8" width="3.2" height="8.6" rx="1" fill="#4a90e2"/>
<rect x="421.2" y="392.8" width="510.8" height="2.8" fill="#40b040"/>
<rect x="417.8" y="395.6" width="3.6" height="11" fill="#3a3a3a"/>
<defs><linearGradient id="lb" x1="0" y1="0" x2="0" y2="1"><stop offset="0" stop-color="#6c84dc"/><stop offset="1" stop-color="#4d66c4"/></linearGradient></defs>
<rect x="421.4" y="396.2" width="510.6" height="10" fill="url(#lb)"/>
<rect x="421.6" y="406.6" width="510.4" height="98.4" fill="#303030"/>
<path d="M421.6 406.6 H932 M421.6 418.6 H932 M421.6 430.6 H932 M421.6 442.6 H932 M421.6 454.6 H932 M421.6 466.6 H932 M421.6 478.6 H932 M421.6 490.6 H932 M421.6 502.6 H932 " stroke="#202020" stroke-width="1"/>
<rect x="421" y="380" width="1.2" height="125" fill="#3a70c4"/>
<path d="M418 374 H425 V378.4 L421.6 382.4 L418 378.4 Z" fill="#4a90e2"/>
<path d="M420.2 409.6 H423.2 M420.2 415.6 H423.2 M421.7 409.6 V415.6 M420.2 421.6 H423.2 M420.2 427.6 H423.2 M421.7 421.6 V427.6 M420.2 433.6 H423.2 M420.2 439.6 H423.2 M421.7 433.6 V439.6 M420.2 457.6 H423.2 M420.2 463.6 H423.2 M421.7 457.6 V463.6 M420.2 469.6 H423.2 M420.2 475.6 H423.2 M421.7 469.6 V475.6 M420.2 481.6 H423.2 M420.2 487.6 H423.2 M421.7 481.6 V487.6 M420.2 493.6 H423.2 M420.2 499.6 H423.2 M421.7 493.6 V499.6 " stroke="#b4c6e0" stroke-width="1.1" fill="none"/>
<path d="M421.6 446.6 L423.8 448.8 L421.6 451 L419.4 448.8Z" fill="#3f8fe8"/>
</svg>
<div class="t" style="left:17px;top:349px;font-size:7px;color:#a8a8a8">渲染队列</div>
<div class="t" style="left:90.2px;top:349px;font-size:7px;color:#d8d8d8">合成 1</div>
<div class="t" style="left:7.4px;top:363.6px;font-size:9.05px;font-weight:bold;color:#559ae8;line-height:12px;height:12px">0:00:00:00</div>
<div class="t" style="left:7.6px;top:373.6px;font-size:6.05px;color:#2f6098;font-family:'Liberation Serif',serif">00000 (25.00 fps)</div>
<div class="t" style="left:64.6px;top:384.6px;font-size:6px;color:#808080;font-style:italic">#</div>
<div class="t" style="left:83.6px;top:384.6px;font-size:6.7px;color:#959595">源名称</div>
<div class="t" style="left:187.6px;top:384.2px;font-size:7.4px;color:#c8c8c8;font-style:italic;font-family:'Liberation Serif',serif">fx</div>
<div class="t" style="left:243px;top:384.6px;font-size:6.7px;color:#959595">模式</div>
<div class="t" style="left:288.4px;top:384.6px;font-size:6.4px;color:#929292">T</div>
<div class="t" style="left:298.6px;top:384.6px;font-size:6.2px;color:#929292">TrkMat</div>
<div class="t" style="left:341.2px;top:384.6px;font-size:6.7px;color:#959595">父级和链接</div>
<div class="t" style="left:64.6px;top:396.6px;font-size:7px;color:#e0e0e0">1</div>
<div class="t" style="left:95.6px;top:397px;font-size:6.7px;color:#d0d0d0">形状图层 1</div>
<div class="t" style="left:245px;top:396.8px;font-size:6.3px;color:#e8e8e8;font-weight:bold">正常</div>
<div class="t" style="left:355.6px;top:396.8px;font-size:6.3px;color:#e8e8e8;font-weight:bold">无</div>
<div class="t" style="left:67.6px;top:408.2px;font-size:6.3px;color:#8e8e8e">内容</div>
<div class="t" style="left:213px;top:408px;font-size:6.3px;color:#8e8e8e">添加:</div>
<div class="t" style="left:80px;top:420px;font-size:6.3px;color:#8e8e8e">形状 1</div>
<div class="t" style="left:164.4px;top:420px;font-size:6.7px;color:#e4e4e4;font-weight:500">正常</div>
<div class="t" style="left:92.4px;top:432px;font-size:6.3px;color:#b8b8b8">路径 1</div>
<div class="t" style="left:125px;top:444px;font-size:6.3px;color:#b0b0b0">路径</div>
<div class="t" style="left:91.2px;top:456px;font-size:6.3px;color:#8e8e8e">描边 1</div>
<div class="t" style="left:164.4px;top:456px;font-size:6.7px;color:#e4e4e4;font-weight:500">正常</div>
<div class="t" style="left:91.2px;top:468px;font-size:6.3px;color:#8e8e8e">填充 1</div>
<div class="t" style="left:164.4px;top:468px;font-size:6.7px;color:#e4e4e4;font-weight:500">正常</div>
<div class="t" style="left:91.2px;top:480px;font-size:6.3px;color:#8e8e8e">变换: 形状 1</div>
<div class="t" style="left:68px;top:491.6px;font-size:6.3px;color:#8e8e8e">变换</div>
<div class="t" style="left:160.6px;top:491.6px;font-size:6.3px;color:#3f86dc">重置</div>
<div class="t" style="left:425.4px;top:371.2px;font-size:5.2px;color:#909090;font-family:'Liberation Serif',serif">0s</div>
<div class="t" style="left:530.1px;top:371.2px;font-size:5.9px;color:#b8b8b8;font-family:'Liberation Serif',serif">01s</div>
<div class="t" style="left:642.4px;top:371.2px;font-size:5.9px;color:#b8b8b8;font-family:'Liberation Serif',serif">02s</div>
<div class="t" style="left:754.6px;top:371.2px;font-size:5.9px;color:#b8b8b8;font-family:'Liberation Serif',serif">03s</div>
<div class="t" style="left:866.9px;top:371.2px;font-size:5.9px;color:#b8b8b8;font-family:'Liberation Serif',serif">04s</div>


</div>
</body>
</html>
